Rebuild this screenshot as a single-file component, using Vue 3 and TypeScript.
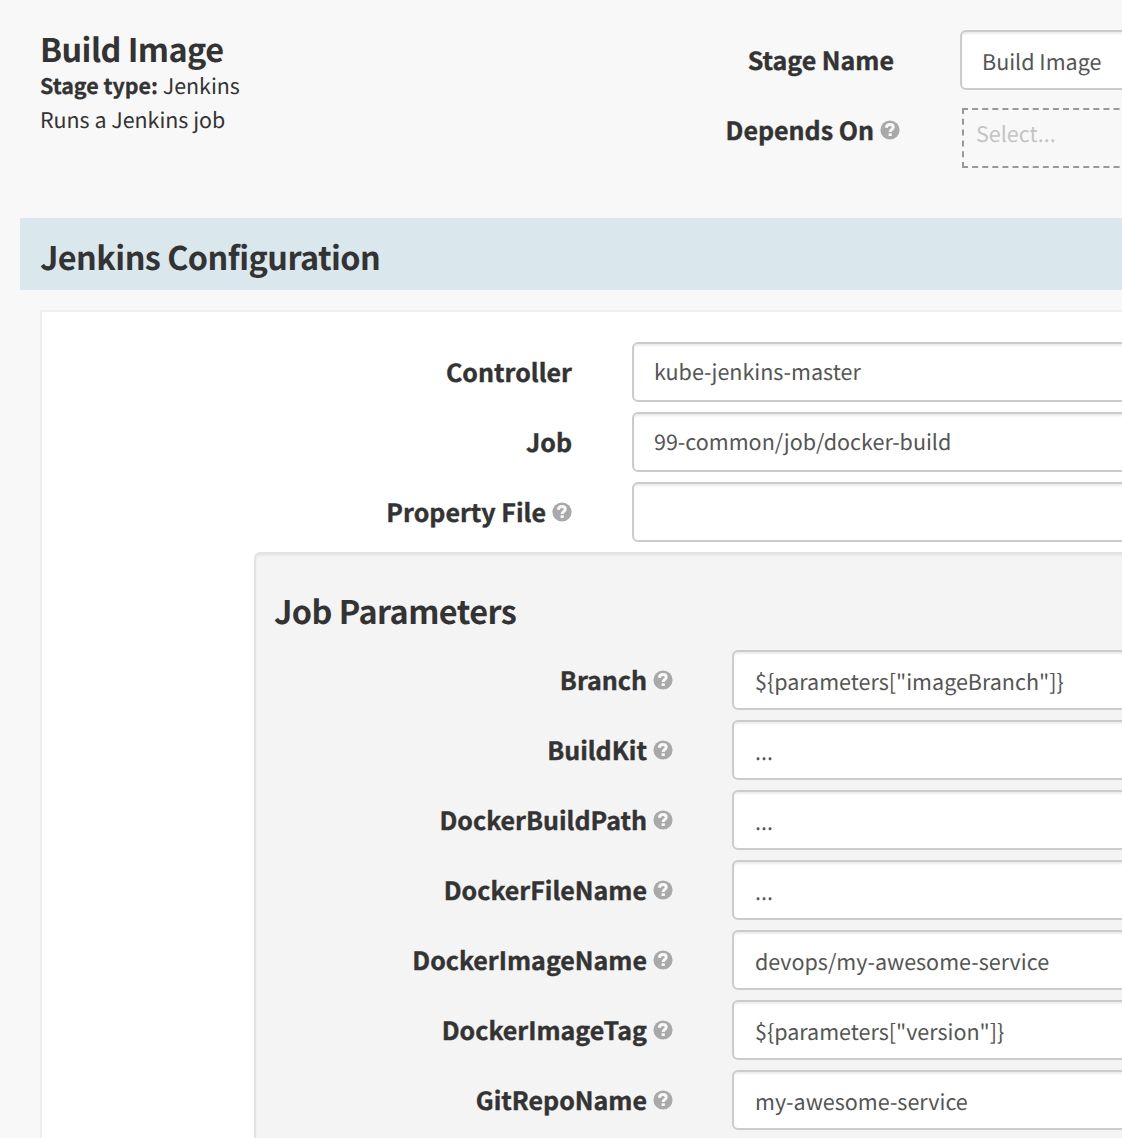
<script setup lang="ts">
interface Field { label: string; value: string; help: boolean }

const stageFields: Field[] = [
  { label: 'Controller', value: 'kube-jenkins-master', help: false },
  { label: 'Job', value: '99-common/job/docker-build', help: false },
  { label: 'Property File', value: '', help: true },
]
const jobParameters: Field[] = [
  { label: 'Branch', value: '${parameters["imageBranch"]}', help: true },
  { label: 'BuildKit', value: '...', help: true },
  { label: 'DockerBuildPath', value: '...', help: true },
  { label: 'DockerFileName', value: '...', help: true },
  { label: 'DockerImageName', value: 'devops/my-awesome-service', help: true },
  { label: 'DockerImageTag', value: '${parameters["version"]}', help: true },
  { label: 'GitRepoName', value: 'my-awesome-service', help: true },
]
</script>

<template>
  <main class="page">
    <header class="top">
      <div class="summary">
        <h3 class="title">Build Image</h3>
        <div class="line"><b>Stage type:</b> Jenkins</div>
        <div class="line desc">Runs a Jenkins job</div>
      </div>
      <div class="stage-form">
        <div class="row name-row">
          <label class="label"><span>Stage Name</span></label>
          <div class="input">Build Image</div>
        </div>
        <div class="row depends-row">
          <label class="label">
            <span>Depends On</span>
            <svg class="help" viewBox="0 0 20 20"><circle cx="10" cy="10" r="9.6" /><path d="M6.2 7.7C6.6 5.6 8 4.600 10 4.600C12 4.600 13.200 5.700 13.200 7.200C13.200 9.400 10.200 9.300 10.200 12" /><rect x="8.600" y="13.300" width="3.200" height="2.700" /></svg>
          </label>
          <div class="select">Select...</div>
        </div>
      </div>
    </header>

    <h3 class="section-heading">Jenkins Configuration</h3>

    <section class="panel">
      <div v-for="f in stageFields" :key="f.label" class="row">
        <label class="label">
          <span>{{ f.label }}</span>
          <svg v-if="f.help" class="help" viewBox="0 0 20 20"><circle cx="10" cy="10" r="9.6" /><path d="M6.2 7.7C6.6 5.6 8 4.600 10 4.600C12 4.600 13.200 5.700 13.200 7.200C13.200 9.400 10.200 9.300 10.200 12" /><rect x="8.600" y="13.300" width="3.200" height="2.700" /></svg>
        </label>
        <div class="input choice">{{ f.value }}</div>
      </div>
      <div class="well">
        <h3 class="title well-title">Job Parameters</h3>
        <div v-for="f in jobParameters" :key="f.label" class="row">
          <label class="label">
            <span>{{ f.label }}</span>
            <svg v-if="f.help" class="help" viewBox="0 0 20 20"><circle cx="10" cy="10" r="9.6" /><path d="M6.2 7.7C6.6 5.6 8 4.600 10 4.600C12 4.600 13.200 5.700 13.200 7.200C13.200 9.400 10.200 9.300 10.200 12" /><rect x="8.600" y="13.300" width="3.200" height="2.700" /></svg>
          </label>
          <div class="input param">{{ f.value }}</div>
        </div>
      </div>
    </section>
  </main>
</template>

<style>
body { margin: 0; background: #f8f8f8; }
</style>

<style scoped>
.page {
  box-sizing: border-box;
  width: 1122px;
  height: 1138px;
  overflow: hidden;
  background: #f8f8f8;
  color: #333;
  font-family: "Source Sans Pro", "Noto Sans CJK SC", sans-serif;
  font-size: 21.5px;
  text-rendering: geometricPrecision;
}
.top { display: flex; height: 218px; }
.summary { flex: none; width: 640px; padding: 29px 0 0 40px; box-sizing: border-box; }
.title { margin: 0; font-size: 32.4px; line-height: 40px; font-weight: 700; letter-spacing: -.55px; white-space: nowrap; }
.line { font-size: 21.4px; line-height: 34px; }
.stage-form { flex: 1; min-width: 0; padding-top: 30px; }
.row { display: flex; height: 60px; margin-bottom: 10px; }
.label {
  display: flex;
  justify-content: flex-end;
  align-items: center;
  gap: 6px;
  box-sizing: border-box;
  flex: none;
  font-size: 25px;
  font-weight: 700;
  white-space: nowrap;
  -webkit-text-stroke: .4px #333;
}
.line b { -webkit-text-stroke: .3px #333; }
.help { width: 20px; height: 20px; flex: none; fill: #a9a9a9; }
.help path { fill: none; stroke: #f8f8f8; stroke-width: 3; }
.help rect { fill: #f8f8f8; }
.input {
  box-sizing: border-box;
  flex: none;
  width: 700px;
  height: 60px;
  padding-left: 20px;
  border: 2px solid #ccc;
  border-radius: 6px;
  background: #fff;
  box-shadow: inset 0 2px 2px rgba(0, 0, 0, .075);
  color: #555;
  line-height: 59px;
  white-space: pre;
}
.choice { line-height: 55px; }
.stage-form .label { width: 254px; margin-right: 66px; }
.depends-row { margin-top: 18px; }
.depends-row .label { width: 260px; margin-right: 62px; height: 44px; }
.select {
  box-sizing: border-box;
  width: 400px;
  flex: none;
  height: 60px;
  border: 2px dashed #999;
  padding-left: 12px;
  line-height: 48px;
  color: #c4c4c4;
}
.section-heading {
  box-sizing: border-box;
  height: 72px;
  margin: 0 0 20px 20px;
  padding: 0 20px;
  background: #dae7ed;
  font-size: 32.4px;
  font-weight: 700;
  letter-spacing: -.55px;
  line-height: 78px;
}
.panel {
  box-sizing: border-box;
  width: 1200px;
  height: 900px;
  margin-left: 40px;
  padding-top: 30px;
  border: 2px solid #eee;
  background: #fff;
}
.panel .label { width: 530px; margin-right: 60px; }
.well {
  box-sizing: border-box;
  width: 1000px;
  height: 700px;
  margin-left: 212px;
  padding: 37px 0 0 18px;
  border: 2px solid #e3e3e3;
  border-radius: 6px;
  background: #f4f4f4;
  box-shadow: inset 0 2px 2px rgba(0, 0, 0, .05);
}
.well-title { margin-bottom: 19px; }
.well .label { width: 399px; margin-right: 59px; }
.param { padding-left: 21px; }
</style>
